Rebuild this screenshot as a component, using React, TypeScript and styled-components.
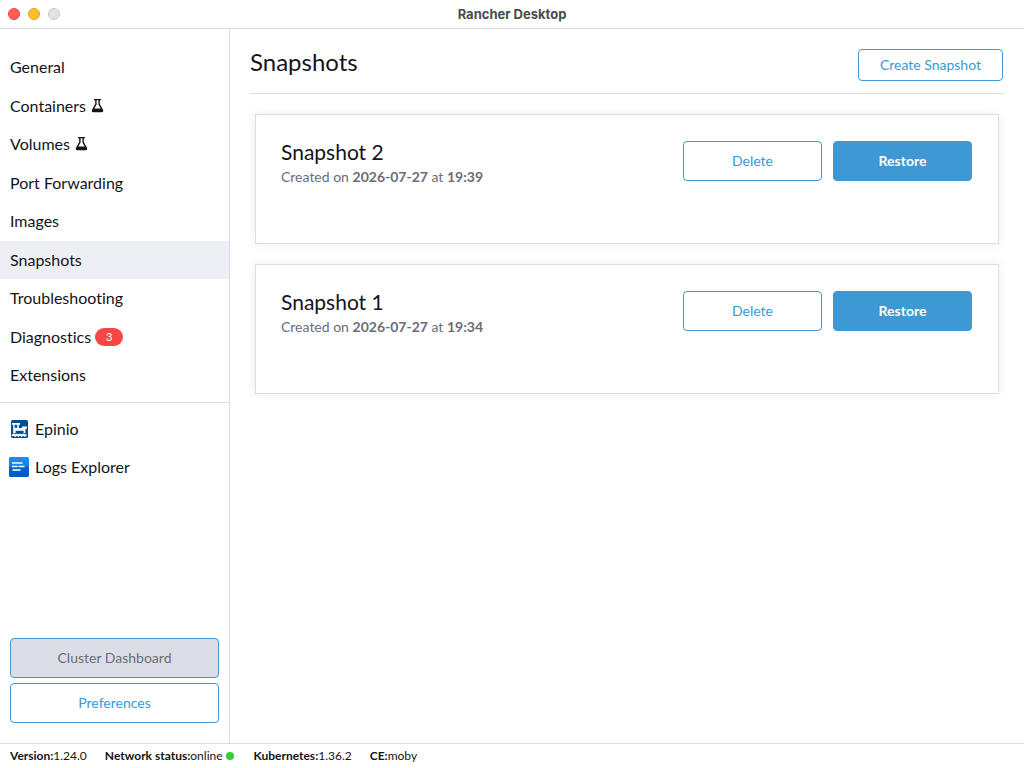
import React from 'react';
import styled, { createGlobalStyle, css } from 'styled-components';

const colors = {
  text: '#141419',
  muted: '#6c6c76',
  border: '#dcdee7',
  active: '#eeeff4',
  primary: '#3d98d3',
  error: '#f64747',
  online: '#32cd32',
};

const GlobalStyle = createGlobalStyle`
  *, *::before, *::after { box-sizing: border-box; }
  body {
    margin: 0;
    background: #fff;
    color: ${colors.text};
    font-family: Lato, 'Liberation Sans', sans-serif;
    font-size: 14px;
    font-variant-ligatures: none;
    line-height: 18px;
  }
`;

const Window = styled.div`
  display: flex;
  flex-direction: column;
  min-height: 100vh;
`;

const TitleBar = styled.header`
  display: grid;
  grid-template-columns: 1fr auto 1fr;
  align-items: center;
  height: 29px;
  padding: 0 8px;
  border-bottom: 1px solid #d9d9d9;
`;

const WindowControls = styled.div`
  display: flex;
  gap: 8px;
`;

const WindowControl = styled.button<{ $fill: string; $edge: string }>`
  width: 12px;
  height: 12px;
  padding: 0;
  border: 1px solid ${({ $edge }) => $edge};
  border-radius: 50%;
  background: ${({ $fill }) => $fill};
`;

const WindowTitle = styled.span`
  color: #4b4b4b;
  font: 700 13px/16px Inter, 'Liberation Sans', sans-serif;
`;

const Body = styled.div`
  display: flex;
  flex: 1;
`;

const Sidebar = styled.aside`
  display: flex;
  flex-direction: column;
  flex: 0 0 230px;
  padding-top: 19px;
  border-right: 1px solid ${colors.border};
`;

const NavList = styled.ul`
  display: grid;
  grid-auto-rows: 39px 38px;
  margin: 0;
  padding: 0 0 7px;
  border-bottom: 1px solid ${colors.border};
  list-style: none;
`;

const ExtensionList = styled.ul`
  display: grid;
  grid-auto-rows: 38px;
  margin: 0;
  padding: 7px 0 0;
  list-style: none;
`;

const NavLink = styled.a<{ $active?: boolean }>`
  display: flex;
  align-items: center;
  gap: 4px;
  height: 100%;
  padding: 0 10px 1px;
  background: ${({ $active }) => ($active ? colors.active : 'transparent')};
  color: ${colors.text};
  font-size: 16px;
  line-height: 20px;
  text-decoration: none;
`;

const ExtensionLink = styled(NavLink)`
  gap: 6px;
  padding: 0 9px;
`;

const FlaskSvg = styled.svg`
  width: 14px;
  height: 18px;
`;

const Badge = styled.span`
  min-width: 28px;
  border-radius: 9px;
  background: ${colors.error};
  color: #fff;
  font-size: 11px;
  line-height: 18px;
  text-align: center;
`;

const SidebarActions = styled.div`
  display: flex;
  flex-direction: column;
  gap: 5px;
  margin-top: auto;
  padding: 10px 10px 20px;
`;

const Button = styled.button<{ $primary?: boolean; $small?: boolean }>`
  min-width: 139px;
  height: ${({ $small }) => ($small ? 32 : 40)}px;
  padding: 0 21px;
  border: 1px solid ${colors.primary};
  border-radius: 4px;
  background: #fff;
  color: ${colors.primary};
  font: inherit;
  font-variant-ligatures: none;
  cursor: pointer;

  ${({ $primary }) =>
    $primary &&
    css`
      background: ${colors.primary};
      color: #fff;
      font-weight: 700;
    `}

  &:disabled {
    background: ${colors.border};
    color: ${colors.muted};
    cursor: not-allowed;
  }
`;

const Main = styled.main`
  flex: 1;
  min-width: 0;
  padding: 20px;
`;

const PageHeader = styled.header`
  display: flex;
  align-items: flex-start;
  justify-content: space-between;
  height: 45px;
  padding-right: 1px;
  border-bottom: 1px solid ${colors.border};
`;

const PageTitle = styled.h1`
  margin: 0;
  font-size: 24px;
  font-weight: 400;
  line-height: 26px;
`;

const CardList = styled.div`
  display: flex;
  flex-direction: column;
  gap: 20px;
  padding: 20px 5px;
`;

const Card = styled.article`
  display: flex;
  justify-content: space-between;
  min-height: 130px;
  padding: 26px;
  padding-left: 25px;
  border: 1px solid ${colors.border};
  box-shadow: 0 0 10px rgba(0, 0, 0, 0.08);
`;

const CardTitle = styled.h2`
  margin: 0 0 5px;
  font-size: 21px;
  font-weight: 400;
  line-height: 22px;
`;

const Created = styled.p`
  margin: 0;
  color: ${colors.muted};
`;

const CardActions = styled.div`
  display: flex;
  align-items: flex-start;
  gap: 11px;
`;

const StatusBar = styled.footer`
  display: flex;
  align-items: center;
  gap: 18px;
  height: 25px;
  padding: 0 10px;
  border-top: 1px solid ${colors.border};
  font-size: 12px;
  line-height: 16px;
`;

const StatusItem = styled.span`
  display: flex;
  align-items: center;
`;

const OnlineDot = styled.i`
  width: 8px;
  height: 8px;
  margin: 0 2px 0 3px;
  border-radius: 50%;
  background: ${colors.online};
`;

const Flask = () => (
  <FlaskSvg viewBox="-1 0 14 18" role="img" aria-label="Experimental">
    <path d="M3 2.6h7M4.9 2.5v4.7L1.6 13.2c-.4.8 0 1.3.7 1.3h8.4c.7 0 1.1-.5.7-1.3L8.1 7.2V2.5" fill="none" stroke={colors.text} strokeWidth="1.4" />
    <path d="M2.8 11.6h7.4l1.5 2.9H1.3z" fill={colors.text} />
  </FlaskSvg>
);

const EpinioIcon = () => (
  <svg width="20" height="20" viewBox="0 0 20 20" aria-hidden="true">
    <rect x="2" y="1" width="17" height="18" rx="1.5" fill="#004d93" />
    <path d="M3 4h8v1.8H9.8V9H13V7.6h5v2.2h-1.6v4.4h-1.8v-2.4H6.6v2.4H4.2V5.8H3z" fill="#fff" />
    <path d="M5.6 5.8h2.6v3H5.6z" fill="#004d93" />
    <path d="M3 16.8l1.6-1.2 1.6 1.2 1.6-1.2 1.6 1.2 1.6-1.2 1.6 1.2 1.6-1.2 1.6 1.2 1.6-1.2" fill="none" stroke="#fff" strokeWidth="1.8" />
  </svg>
);

const LogsIcon = () => (
  <svg width="20" height="20" viewBox="0 0 20 20" aria-hidden="true">
    <defs>
      <linearGradient id="logs" x1="0" y1="0" x2="0" y2="1">
        <stop offset="0" stopColor="#1d8df0" />
        <stop offset="0.45" stopColor="#167fe6" />
        <stop offset="0.5" stopColor="#0b62cc" />
        <stop offset="1" stopColor="#0757c0" />
      </linearGradient>
    </defs>
    <rect width="20" height="20" rx="1.5" fill="url(#logs)" />
    <path d="M3 9.5h5.5M9.5 9.5h6" stroke="#fff" strokeWidth="1.6" />
    <path d="M3 6h10.5M3.5 13h8" stroke="#bcdcf8" strokeWidth="1.8" />
  </svg>
);

const navItems: { label: string; experimental?: boolean; count?: number }[] = [
  { label: 'General' },
  { label: 'Containers', experimental: true },
  { label: 'Volumes', experimental: true },
  { label: 'Port Forwarding' },
  { label: 'Images' },
  { label: 'Snapshots' },
  { label: 'Troubleshooting' },
  { label: 'Diagnostics', count: 3 },
  { label: 'Extensions' },
];

const extensions = [
  { label: 'Epinio', Icon: EpinioIcon },
  { label: 'Logs Explorer', Icon: LogsIcon },
];

const snapshots = [
  { name: 'Snapshot 2', date: '2026-07-27', time: '19:39' },
  { name: 'Snapshot 1', date: '2026-07-27', time: '19:34' },
];

export default function App() {
  const current = 'Snapshots';
  return (
    <Window>
      <GlobalStyle />
      <TitleBar>
        <WindowControls>
          <WindowControl $fill="#ff5f57" $edge="#e2463f" aria-label="Close" />
          <WindowControl $fill="#febc2e" $edge="#e1a116" aria-label="Minimize" />
          <WindowControl $fill="#e3e3e3" $edge="#c9c9c9" aria-label="Zoom" disabled />
        </WindowControls>
        <WindowTitle>Rancher Desktop</WindowTitle>
      </TitleBar>
      <Body>
        <Sidebar>
          <nav aria-label="Main">
            <NavList>
              {navItems.map(({ label, experimental, count }) => (
                <li key={label}>
                  <NavLink href="#" $active={label === current} aria-current={label === current ? 'page' : undefined}>
                    {label}
                    {experimental && <Flask />}
                    {count && <Badge>{count}</Badge>}
                  </NavLink>
                </li>
              ))}
            </NavList>
            <ExtensionList>
              {extensions.map(({ label, Icon }) => (
                <li key={label}>
                  <ExtensionLink href="#">
                    <Icon />
                    {label}
                  </ExtensionLink>
                </li>
              ))}
            </ExtensionList>
          </nav>
          <SidebarActions>
            <Button disabled>Cluster Dashboard</Button>
            <Button>Preferences</Button>
          </SidebarActions>
        </Sidebar>
        <Main>
          <PageHeader>
            <PageTitle>Snapshots</PageTitle>
            <Button $small>Create Snapshot</Button>
          </PageHeader>
          <CardList>
            {snapshots.map(({ name, date, time }) => (
              <Card key={name}>
                <div>
                  <CardTitle>{name}</CardTitle>
                  <Created>
                    Created on <b>{date}</b> at <b>{time}</b>
                  </Created>
                </div>
                <CardActions>
                  <Button>Delete</Button>
                  <Button $primary>Restore</Button>
                </CardActions>
              </Card>
            ))}
          </CardList>
        </Main>
      </Body>
      <StatusBar>
        <StatusItem><b>Version:</b>1.24.0</StatusItem>
        <StatusItem><b>Network status:</b>online<OnlineDot /></StatusItem>
        <StatusItem><b>Kubernetes:</b>1.36.2</StatusItem>
        <StatusItem><b>CE:</b>moby</StatusItem>
      </StatusBar>
    </Window>
  );
}
